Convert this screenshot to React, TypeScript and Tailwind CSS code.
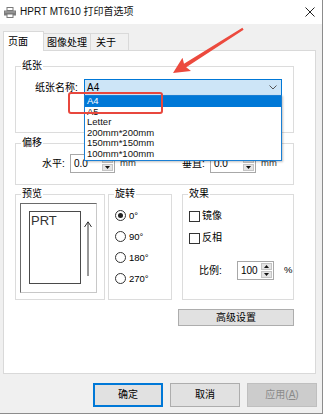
import type { ReactNode } from 'react';

function Group({ label, className, children }: { label: string; className: string; children?: ReactNode }) {
  return (
    <div className={`border border-[#dcdcdc] bg-white ${className}`}>
      <div className="-mt-[7px] ml-[5px] w-fit bg-white px-[1px] h-[12px] leading-[12px]">{label}</div>
      {children}
    </div>
  );
}

function Tri({ up }: { up?: boolean }) {
  return (
    <svg width="5" height="3" viewBox="0 0 5 3">
      <path d={up ? 'M0 3 L2.5 0 L5 3 Z' : 'M0 0 L5 0 L2.5 3 Z'} fill="#111" />
    </svg>
  );
}

// numeric box with up/down buttons
function SpinBox({ value, w, h }: { value: string; w: string; h: string }) {
  return (
    <div className={`flex items-center border border-[#a8a8a8] bg-white ${w} ${h}`}>
      <span className="flex-1 pl-[3px] text-[10px] leading-[12px]">{value}</span>
      <div className="flex flex-col h-full w-[11px] py-[1px] mr-[1px] gap-[1px]">
        <div className="flex-1 flex items-center justify-center bg-[#e4e4e4] border border-[#c4c4c4]">
          <Tri up />
        </div>
        <div className="flex-1 flex items-center justify-center bg-[#e4e4e4] border border-[#c4c4c4]">
          <Tri />
        </div>
      </div>
    </div>
  );
}

const sizes = ['A4', 'A5', 'Letter', '200mm*200mm', '150mm*150mm', '100mm*100mm'];

export default function App() {
  return (
    <div className="w-[325px] h-[415px] bg-white relative overflow-hidden text-black font-['Liberation_Sans','Noto_Sans_CJK_SC',sans-serif] text-[10px]">
      <div className="w-[323px] h-[414px] bg-[#f0f0f0] border-r border-b border-[#8c8c8c] flex flex-col">
        {/* title bar */}
        <div className="h-[24px] bg-white flex items-center shrink-0">
          <svg className="ml-[4px]" width="12" height="11" viewBox="0 0 12 11">
            <rect x="3" y="0.5" width="6" height="3" fill="#fff" stroke="#7a7a7a" />
            <rect x="0" y="3.5" width="12" height="5" fill="#7d7d7d" />
            <rect x="1" y="4.5" width="10" height="1" fill="#a9a9a9" />
            <rect x="3" y="7" width="6" height="3.5" fill="#fff" stroke="#7a7a7a" />
          </svg>
          <span className="ml-[4px] text-[10px] leading-[12px] text-[#111]">HPRT MT610 打印首选项</span>
          <svg className="ml-auto mr-[7px]" width="10" height="10" viewBox="0 0 10 10">
            <path d="M0.5 0.5 L9.5 9.5 M9.5 0.5 L0.5 9.5" stroke="#222" strokeWidth="1" />
          </svg>
        </div>

        {/* tabs */}
        <div className="relative z-10 flex items-end pl-[3px] pt-[7px] shrink-0">
          <div className="w-[41px] h-[20px] mb-[-1px] bg-white border-l border-t border-r border-[#d9d9d9] pl-[4px] pt-[4px] leading-[12px]">
            页面
          </div>
          <div className="w-[47px] h-[17px] bg-[#f0f0f0] border-t border-r border-[#d9d9d9] pl-[3px] pt-[3px] leading-[12px]">
            图像处理
          </div>
          <div className="w-[38px] h-[17px] bg-[#f0f0f0] border-t border-r border-[#d9d9d9] pl-[5px] pt-[3px] leading-[12px]">
            关于
          </div>
        </div>

        {/* page panel */}
        <div className="ml-[3px] w-[313px] h-[324px] shrink-0 bg-white border border-[#d9d9d9] pl-[11px] pt-[15px] flex flex-col">
          <Group label="纸张" className="w-[279px] h-[67px]">
            <div className="mt-[7px] flex items-center pl-[19px]">
              <span className="w-[49px] leading-[12px]">纸张名称:</span>
              <div className="relative w-[198px] h-[17px] border border-[#0078d7] bg-[#cde5f7] flex items-center pl-[2px]">
                <span className="flex-1 text-[10px] leading-[12px]">A4</span>
                <svg className="mr-[4px]" width="8" height="5" viewBox="0 0 8 5">
                  <path d="M0.5 0.5 L4 4 L7.5 0.5" fill="none" stroke="#555" strokeWidth="1" />
                </svg>
                <div className="absolute left-[-1px] top-[15px] z-20 w-[198px] bg-white border border-[#1a7fd4] shadow-[1px_1px_2px_rgba(0,0,0,0.25)]">
                  {sizes.map((s, i) => (
                    <div
                      key={s}
                      className={`h-[10.6px] leading-[10.6px] pl-[2px] text-[9.5px] ${i === 0 ? 'bg-[#0078d7] text-white' : 'text-[#111]'}`}
                    >
                      {s}
                    </div>
                  ))}
                </div>
              </div>
            </div>
          </Group>

          <Group label="偏移" className="mt-[10px] w-[279px] h-[42px]">
            <div className="mt-[5px] flex items-center pl-[26px]">
              <div className="w-[140px] flex items-center">
                <span className="w-[28px] leading-[12px]">水平:</span>
                <SpinBox value="0.0" w="w-[45px]" h="h-[19px]" />
                <span className="ml-[5px] text-[9.5px] text-[#333]">mm</span>
              </div>
              <div className="flex items-center">
                <span className="w-[28px] leading-[12px]">垂直:</span>
                <SpinBox value="0.0" w="w-[46px]" h="h-[19px]" />
                <span className="ml-[5px] text-[9.5px] text-[#333]">mm</span>
              </div>
            </div>
          </Group>

          <div className="mt-[9px] flex items-start">
            <Group label="预览" className="w-[90px] h-[106px]">
              <div className="mt-[3px] ml-[4px] w-[77px] h-[90px] border-l border-t border-[#6a6a6a] border-r border-b border-r-[#c8c8c8] border-b-[#c8c8c8] flex items-start">
                <div className="mt-[7px] ml-[8px] w-[52px] h-[73px] border border-[#4a4a4a]">
                  <div className="pl-[1px] pt-[1px] text-[13px] leading-[15px] text-[#333]">PRT</div>
                </div>
                <svg className="mt-[17px] ml-[3px]" width="8" height="56" viewBox="0 0 8 56">
                  <path d="M4 1 L4 55 M0.5 6 L4 0.8 L7.5 6" fill="none" stroke="#333" strokeWidth="1" />
                </svg>
              </div>
            </Group>

            <Group label="旋转" className="ml-[3px] w-[64px] h-[106px]">
              <div className="pt-[5px] pl-[6px] flex flex-col">
                {['0°', '90°', '180°', '270°'].map((r, i) => (
                  <div key={r} className="h-[21px] flex items-center gap-[3px]">
                    <span className="w-[11px] h-[11px] rounded-full border border-[#333] bg-white flex items-center justify-center">
                      {i === 0 && <span className="w-[5px] h-[5px] rounded-full bg-[#222]" />}
                    </span>
                    <span className="text-[9.5px] leading-[12px]">{r}</span>
                  </div>
                ))}
              </div>
            </Group>

            <Group label="效果" className="ml-[10px] w-[112px] h-[106px]">
              <div className="pt-[5px] pl-[6px] flex flex-col">
                {['镜像', '反相'].map((c) => (
                  <div key={c} className="h-[22px] flex items-center gap-[2px]">
                    <span className="w-[11px] h-[11px] border border-[#333] bg-white" />
                    <span className="leading-[12px]">{c}</span>
                  </div>
                ))}
              </div>
              <div className="mt-[12px] ml-[16px] flex items-center">
                <span className="w-[38px] leading-[12px]">比例:</span>
                <SpinBox value="100" w="w-[37px]" h="h-[19px]" />
                <span className="ml-[10px] text-[9.5px]">%</span>
              </div>
            </Group>
          </div>

          <button className="mt-[9px] ml-[163px] w-[116px] h-[17px] bg-[#e1e1e1] border border-[#adadad] leading-[12px]">
            高级设置
          </button>
        </div>

        {/* dialog buttons */}
        <div className="mt-[9px] pl-[93px] flex gap-[7px]">
          <button className="w-[70px] h-[24px] bg-[#e1e1e1] border-2 border-[#0078d7] leading-[12px]">确定</button>
          <button className="w-[70px] h-[24px] bg-[#e1e1e1] border border-[#adadad] leading-[12px]">取消</button>
          <button className="w-[70px] h-[24px] bg-[#cccccc] border border-[#bfbfbf] text-[#8a8a8a] leading-[12px]">
            应用(<span className="underline">A</span>)
          </button>
        </div>
      </div>

      {/* annotations drawn over the screenshot */}
      <div className="absolute left-[68px] top-[92px] w-[95px] h-[22px] border-2 border-[#e8473d] rounded-[3px] z-30" />
      <svg className="absolute left-0 top-0 z-30" width="325" height="100" viewBox="0 0 325 100">
        <polygon
          points="173,73 182.5,57.8 184,63.8 242.4,27.8 243.6,29.8 186.2,67.2 191,71"
          fill="#ec4a3e"
        />
      </svg>
    </div>
  );
}
